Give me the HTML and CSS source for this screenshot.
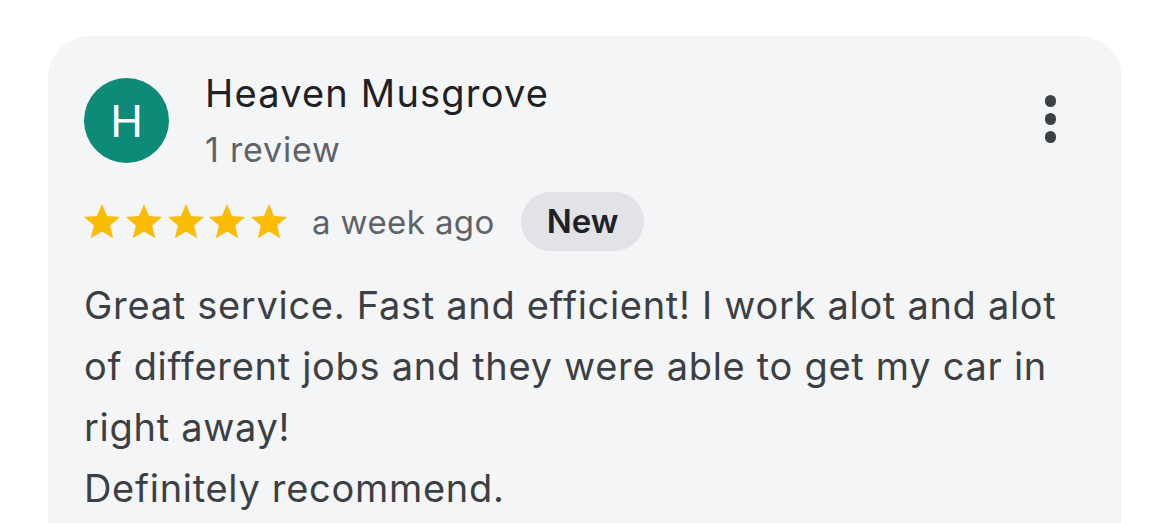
FILE: index.html
```html
<!DOCTYPE html>
<html>
<head>
<meta charset="utf-8">
<link rel="stylesheet" href="styles.css">
</head>
<body>
<div class="card">
  <div class="header">
    <div class="avatar">H</div>
    <div class="who">
      <div class="name">Heaven Musgrove</div>
      <div class="count">1 review</div>
    </div>
    <div class="more">
      <span class="dot"></span><span class="dot"></span><span class="dot"></span>
    </div>
  </div>
  <div class="meta">
    <div class="stars">
      <svg viewBox="2 2 20 19" class="star"><path d="M12 17.27L18.18 21l-1.64-7.03L22 9.24l-7.19-.61L12 2 9.19 8.63 2 9.24l5.46 4.73L5.82 21z"/></svg>
      <svg viewBox="2 2 20 19" class="star"><path d="M12 17.27L18.18 21l-1.64-7.03L22 9.24l-7.19-.61L12 2 9.19 8.63 2 9.24l5.46 4.73L5.82 21z"/></svg>
      <svg viewBox="2 2 20 19" class="star"><path d="M12 17.27L18.18 21l-1.64-7.03L22 9.24l-7.19-.61L12 2 9.19 8.63 2 9.24l5.46 4.73L5.82 21z"/></svg>
      <svg viewBox="2 2 20 19" class="star"><path d="M12 17.27L18.18 21l-1.64-7.03L22 9.24l-7.19-.61L12 2 9.19 8.63 2 9.24l5.46 4.73L5.82 21z"/></svg>
      <svg viewBox="2 2 20 19" class="star"><path d="M12 17.27L18.18 21l-1.64-7.03L22 9.24l-7.19-.61L12 2 9.19 8.63 2 9.24l5.46 4.73L5.82 21z"/></svg>
    </div>
    <span class="ago">a week ago</span>
    <span class="badge">New</span>
  </div>
  <p class="text">Great service. Fast and efficient! I work alot and alot of different jobs and they were able to get my car in right away!<br>Definitely recommend.</p>
</div>
</body>
</html>
```
FILE: styles.css
```css
html, body {
  margin: 0;
  padding: 0;
  background: #ffffff;
  font-family: Inter, "Liberation Sans", Arial, sans-serif;
}
body {
  padding: 36px 48px 0 48px;
  height: 523px;
  box-sizing: border-box;
  overflow: hidden;
}
.card {
  width: 1074px;
  background: #f4f5f7;
  border-radius: 42px;
  padding: 42px 36px 40px 36px;
  box-sizing: border-box;
  min-height: 600px;
}
.header {
  display: flex;
  align-items: flex-start;
}
.avatar {
  width: 85px;
  height: 85px;
  border-radius: 50%;
  background: #0e8a78;
  color: #fff;
  font-size: 44px;
  display: flex;
  align-items: center;
  justify-content: center;
  flex: none;
}
.who {
  margin-left: 36px;
  margin-top: -7px;
  flex: 1;
}
.name {
  font-size: 38px;
  line-height: 44px;
  letter-spacing: 1.2px;
  color: #202124;
}
.count {
  margin-top: 15px;
  font-size: 34px;
  line-height: 40px;
  letter-spacing: 0.8px;
  color: #5f6368;
}
.more {
  display: flex;
  flex-direction: column;
  align-items: center;
  gap: 6.5px;
  margin-top: 17px;
  margin-right: 30px;
}
.dot {
  width: 11.5px;
  height: 11.5px;
  border-radius: 50%;
  background: #3c4043;
}
.meta {
  display: flex;
  align-items: center;
  margin-top: 22px;
}
.stars {
  display: flex;
  gap: 5.75px;
}
.star {
  width: 36px;
  height: 34.2px;
  fill: #fbbc04;
}
.ago {
  margin-left: 25px;
  font-size: 33px;
  letter-spacing: 0.4px;
  color: #5f6368;
}
.badge {
  margin-left: 26px;
  background: #e1e3e6;
  color: #202124;
  font-size: 33px;
  font-weight: 600;
  border-radius: 30px;
  padding: 0 26px;
  height: 59px;
  line-height: 59px;
}
.text {
  margin: 24px 0 0 0;
  font-size: 38px;
  line-height: 61px;
  letter-spacing: 0.7px;
  color: #3c4043;
}
```
